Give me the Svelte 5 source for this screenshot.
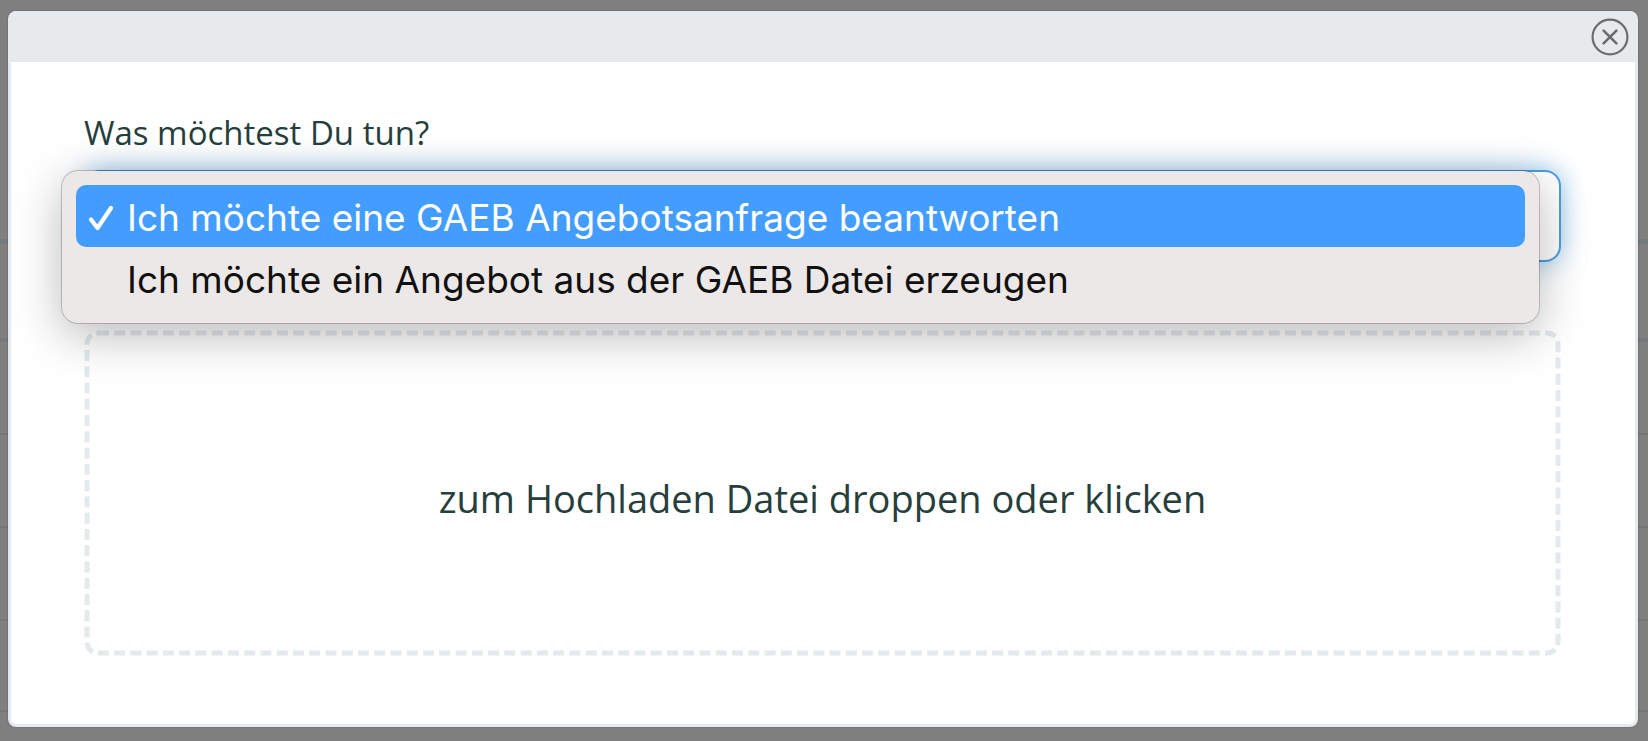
<script>
  const options = [
    { value: 'answer', label: 'Ich möchte eine GAEB Angebotsanfrage beantworten' },
    { value: 'create', label: 'Ich möchte ein Angebot aus der GAEB Datei erzeugen' }
  ];

  let selected = $state('answer');
  let visible = $state(true);
  let listOpen = $state(true);

  function choose(value) {
    selected = value;
    listOpen = false;
  }
</script>

<div class="page">
  <div class="rows" aria-hidden="true">
    <div class="row first"></div>
    <div class="row second"></div>
    <div class="row"></div>
    <div class="row"></div>
    <div class="row"></div>
    <div class="row"></div>
  </div>

  {#if visible}
    <div class="overlay">
      <div class="modal" role="dialog" aria-modal="true" aria-labelledby="task-label">
        <header>
          <button class="close" type="button" aria-label="Schließen" onclick={() => (visible = false)}>
            <svg viewBox="0 0 38 38" aria-hidden="true">
              <circle cx="19" cy="19" r="17.4" />
              <path d="M12.6 12.6 25.4 25.4M25.4 12.6 12.6 25.4" />
            </svg>
          </button>
        </header>

        <div class="body">
          <label id="task-label" class="question" for="task">Was möchtest Du tun?</label>

          <div class="field">
            <select id="task" bind:value={selected} class:focused={listOpen}>
              {#each options as option}
                <option value={option.value}>{option.label}</option>
              {/each}
            </select>

            {#if listOpen}
              <div class="menu" role="listbox" aria-labelledby="task-label">
                {#each options as option}
                  <button
                    type="button"
                    class="option"
                    role="option"
                    aria-selected={option.value === selected}
                    class:active={option.value === selected}
                    onclick={() => choose(option.value)}
                  >
                    <span class="mark">
                      {#if option.value === selected}
                        <svg viewBox="0 0 28 30" aria-hidden="true">
                          <path d="M4 17.5 10.5 26 24 6" />
                        </svg>
                      {/if}
                    </span>
                    <span>{option.label}</span>
                  </button>
                {/each}
              </div>
            {/if}
          </div>

          <button class="dropzone" type="button">
            <svg class="outline" aria-hidden="true">
              <rect x="0" y="0" width="100%" height="100%" rx="11" />
            </svg>
            <span>zum Hochladen Datei droppen oder klicken</span>
          </button>
        </div>
      </div>
    </div>
  {/if}
</div>

<style>
  :global(body) {
    margin: 0;
    background: #7f7f7f;
  }

  .page,
  .page * {
    box-sizing: border-box;
  }

  .page {
    position: relative;
    min-height: 100vh;
    overflow: hidden;
    font-family: 'Open Sans', sans-serif;
    color: #263e3c;
  }

  .row {
    height: 93px;
    border-bottom: 2px solid #73777a;
  }

  .row.first {
    height: 244px;
    border-bottom: 5px solid #75797d;
  }

  .row.second {
    height: 98px;
    border-bottom: 4px solid #75797d;
  }

  .row:last-child {
    height: 91px;
  }

  .overlay {
    position: absolute;
    inset: 0;
    padding: 11px 10px 13px 8px;
  }

  .modal {
    border: 3px solid #e6eaed;
    border-top-width: 0;
    border-radius: 8px;
    background: #fff;
    box-shadow: 0 0 2px rgba(0, 0, 0, 0.3);
  }

  header {
    display: flex;
    align-items: center;
    justify-content: flex-end;
    height: 51px;
    padding-right: 6px;
    background: #e6eaed;
    border-radius: 5px 5px 0 0;
  }

  button {
    margin: 0;
    padding: 0;
    border: 0;
    background: none;
    color: inherit;
    font: inherit;
    cursor: pointer;
  }

  .close {
    width: 38px;
    height: 38px;
  }

  .close svg {
    display: block;
    fill: none;
    stroke: #6c6c6c;
    stroke-width: 2.2;
    stroke-linecap: round;
  }

  .close path {
    stroke-width: 2.6;
  }

  .body {
    display: flex;
    flex-direction: column;
    padding: 47px 74px 68px 73px;
  }

  .question {
    align-self: flex-start;
    font-size: 33px;
    line-height: 48px;
  }

  .field {
    position: relative;
    margin-top: 13px;
  }

  select {
    display: block;
    width: 100%;
    height: 92px;
    padding: 0 40px;
    border: 2px solid #c9d1d6;
    border-radius: 16px;
    background: #fff;
    color: inherit;
    font: inherit;
    font-size: 33px;
    appearance: none;
    outline: none;
  }

  select.focused {
    border-color: #4a9fe2;
    box-shadow: 0 0 26px rgba(74, 159, 226, 0.6);
  }

  .menu {
    position: absolute;
    z-index: 1;
    top: 1px;
    left: -22px;
    right: 22px;
    padding: 14px;
    border-radius: 16px;
    background: #ece8e7;
    box-shadow:
      0 0 0 1px rgba(0, 0, 0, 0.2),
      0 12px 48px rgba(0, 0, 0, 0.28);
    color: #111;
    font-family: Inter, sans-serif;
    font-size: 37px;
  }

  .option {
    display: flex;
    align-items: center;
    width: 100%;
    height: 62px;
    padding-top: 2px;
    border-radius: 10px;
    text-align: left;
    white-space: nowrap;
  }

  .option.active {
    background: #439dff;
    color: #fff;
  }

  .mark {
    flex: none;
    width: 51px;
    padding-left: 11px;
  }

  .mark svg {
    display: block;
    width: 28px;
    height: 30px;
    fill: none;
    stroke: #fff;
    stroke-width: 4.2;
    stroke-linecap: round;
    stroke-linejoin: round;
  }

  .dropzone {
    position: relative;
    display: flex;
    align-items: center;
    justify-content: center;
    height: 326px;
    margin-top: 68px;
    padding: 9px 3px 0;
    font-size: 38px;
  }

  .outline {
    position: absolute;
    top: 3px;
    left: 3px;
    width: calc(100% - 6px);
    height: calc(100% - 6px);
    overflow: visible;
    fill: none;
    stroke: #e4e9ec;
    stroke-width: 5;
    stroke-dasharray: 11 5.26;
  }
</style>
